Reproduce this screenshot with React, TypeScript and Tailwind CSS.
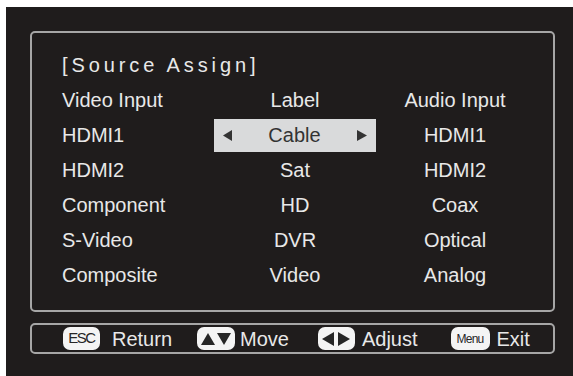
// TV on-screen menu — Source Assign page with video input / label / audio input
// columns and a key-hint footer.

const rows = [
  { video: 'HDMI1', label: 'Cable', audio: 'HDMI1', selected: true },
  { video: 'HDMI2', label: 'Sat', audio: 'HDMI2' },
  { video: 'Component', label: 'HD', audio: 'Coax' },
  { video: 'S-Video', label: 'DVR', audio: 'Optical' },
  { video: 'Composite', label: 'Video', audio: 'Analog' },
];

const font = { fontFamily: '"Liberation Sans", Arial, sans-serif' };

function Tri({ dir, className }: { dir: 'left' | 'right' | 'up' | 'down'; className?: string }) {
  const pts = {
    left: '10,0 10,10 0,5',
    right: '0,0 0,10 10,5',
    up: '0,10 10,10 5,0',
    down: '0,0 10,0 5,10',
  }[dir];
  return (
    <svg viewBox="0 0 10 10" preserveAspectRatio="none" className={className} fill="currentColor">
      <polygon points={pts} />
    </svg>
  );
}

function Badge({ children, className }: { children: React.ReactNode; className?: string }) {
  return (
    <span
      className={`flex h-[23px] items-center justify-center rounded-[7px] bg-[#f4f4f4] text-[#262626] ${className ?? ''}`}
    >
      {children}
    </span>
  );
}

export default function App() {
  return (
    <div className="h-[376px] w-[573px] overflow-hidden bg-white" style={font}>
      <div className="ml-[6px] mt-[7px] flex h-[369px] w-[567px] flex-col bg-[#1f1c1c] pl-[24px] pr-[18px] pt-[24px] text-[#e8e8e8]">
        <div className="h-[281px] w-[525px] rounded-[5px] border-2 border-[#a6a6a6] pl-[30px] pt-[20px]">
          <div className="h-[24px] text-[20px] leading-[24px] tracking-[3.9px]">[Source Assign]</div>
          <div className="mt-[6px] grid grid-cols-[152px_162px_158px] text-[20px] leading-[35px]">
            <div className="h-[35px]">Video Input</div>
            <div className="h-[35px] text-center">Label</div>
            <div className="h-[35px] text-center">Audio Input</div>
            {rows.map((r) => (
              <div key={r.video} className="contents">
                <div className="h-[35px]">{r.video}</div>
                {r.selected ? (
                  <div className="flex h-[35px] items-center">
                    <div className="flex h-[33px] w-full items-center justify-between bg-[#d9dadb] px-[9px] text-[#333]">
                      <Tri dir="left" className="h-[11px] w-[9px]" />
                      <span className="leading-[33px]">{r.label}</span>
                      <Tri dir="right" className="h-[11px] w-[10px]" />
                    </div>
                  </div>
                ) : (
                  <div className="h-[35px] text-center">{r.label}</div>
                )}
                <div className="h-[35px] text-center">{r.audio}</div>
              </div>
            ))}
          </div>
        </div>

        <div className="mt-[11px] flex h-[31px] w-[525px] items-center rounded-[5px] border-2 border-[#a6a6a6] pl-[31px] text-[20px]">
          <Badge className="w-[37px] text-[15px] tracking-[-1.5px]">ESC</Badge>
          <span className="ml-[12px]">Return</span>
          <Badge className="ml-[25px] w-[38px] gap-[2px]">
            <Tri dir="up" className="h-[12px] w-[14px]" />
            <Tri dir="down" className="h-[12px] w-[14px]" />
          </Badge>
          <span className="ml-[5px]">Move</span>
          <Badge className="ml-[29px] w-[37px] gap-[4px]">
            <Tri dir="left" className="h-[14px] w-[12px]" />
            <Tri dir="right" className="h-[14px] w-[12px]" />
          </Badge>
          <span className="ml-[7px]">Adjust</span>
          <Badge className="ml-[33px] w-[39px] text-[12px] tracking-[-0.8px]">Menu</Badge>
          <span className="ml-[7px]">Exit</span>
        </div>
      </div>
    </div>
  );
}
